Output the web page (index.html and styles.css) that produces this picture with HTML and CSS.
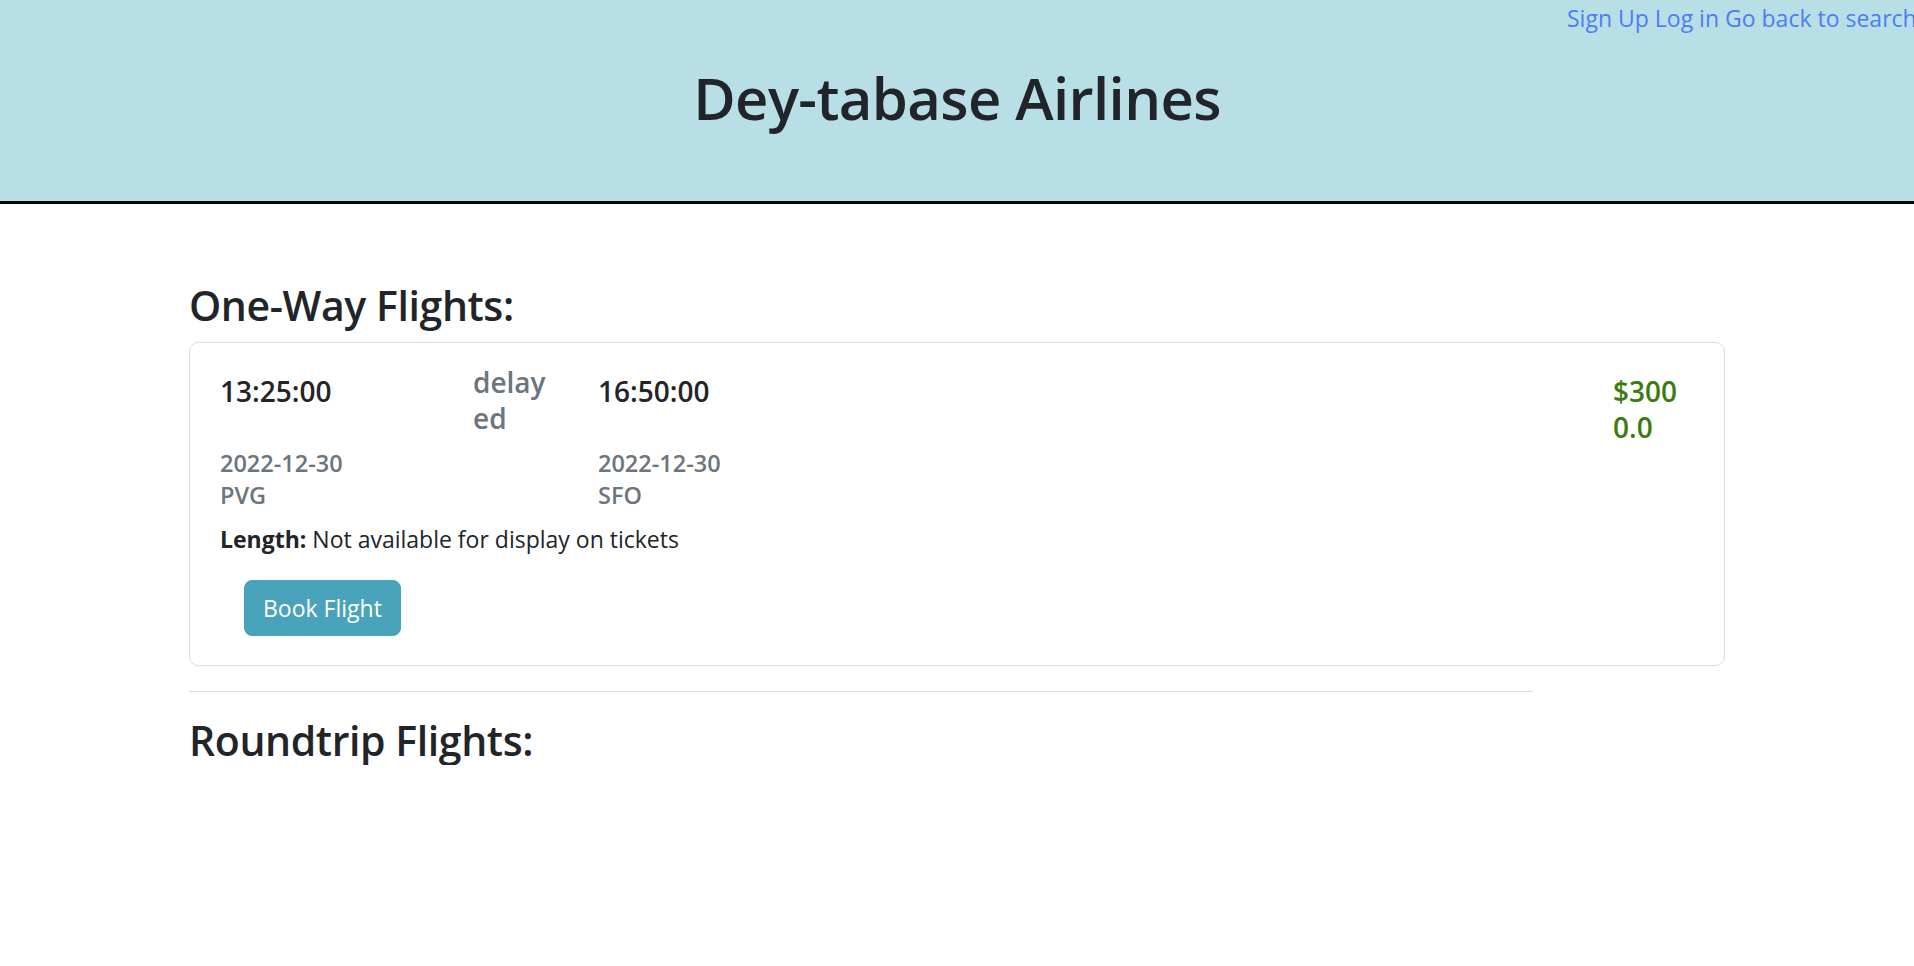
FILE: index.html
```html
<!DOCTYPE html>
<html lang="en">
<head>
<meta charset="utf-8">
<title>Dey-tabase Airlines</title>
<link rel="stylesheet" href="styles.css">
</head>
<body>
<header class="site-header">
  <nav class="top-links">
    <a href="#" class="top-link">Sign Up</a>
    <a href="#" class="top-link">Log in</a>
    <a href="#" class="top-link">Go back to search</a>
  </nav>
  <h1 class="site-title">Dey-tabase Airlines</h1>
</header>
<main class="container">
  <h3 class="section-title">One-Way Flights:</h3>
  <div class="card">
    <div class="card-body">
      <div class="flight-grid">
        <h5 class="time">13:25:00</h5>
        <h5 class="status">delayed</h5>
        <h5 class="time">16:50:00</h5>
        <h5 class="price">$3000.0</h5>
      </div>
      <div class="flight-grid detail-row">
        <div class="place">2022-12-30<br>PVG</div>
        <div></div>
        <div class="place">2022-12-30<br>SFO</div>
      </div>
      <p class="length"><strong>Length:</strong> Not available for display on tickets</p>
      <button class="btn-book" type="button">Book Flight</button>
    </div>
  </div>
  <hr class="divider">
  <h3 class="section-title roundtrip">Roundtrip Flights:</h3>
</main>
</body>
</html>
```
FILE: styles.css
```css
html, body {
  margin: 0;
  padding: 0;
  overflow-x: hidden;
}
body {
  font-family: "Open Sans", "Noto Sans", sans-serif;
  font-size: 24px;
  line-height: 1.5;
  color: #212529;
  background: #fff;
}
.site-header {
  background: #b9dfe6;
  height: 201px;
  border-bottom: 3px solid #000;
  overflow: hidden;
}
.top-links {
  margin-left: 1567px;
  white-space: nowrap;
  font-size: 23px;
  line-height: 36px;
}
.top-link {
  color: #4c7df4;
  text-decoration: none;
}
.site-title {
  margin: 27px 0 0;
  text-align: center;
  font-size: 58px;
  font-weight: 600;
  line-height: 1.2;
  letter-spacing: -0.6px;
}
.container {
  width: 1536px;
  margin: 0 auto;
  padding-top: 77px;
}
.section-title {
  margin: 0 0 12px;
  font-size: 41px;
  font-weight: 600;
  line-height: 1.2;
  letter-spacing: -0.4px;
}
.card {
  border: 1px solid #dedede;
  border-radius: 9px;
  overflow-wrap: anywhere;
}
.card-body {
  padding: 21px 24px 29px 30px;
}
.flight-grid {
  display: grid;
  grid-template-columns: 253px 125px 1fr 87px;
  align-items: start;
}
.time, .status, .price {
  margin: 0;
  font-size: 28px;
  line-height: 36px;
}
.time {
  margin-top: 9px;
  font-weight: 600;
}
.status {
  padding-right: 43px;
  color: #6c757d;
  font-weight: 600;
}
.price {
  margin-top: 9px;
  padding-right: 11px;
  color: #3b7c0e;
  font-weight: 600;
}
.detail-row {
  margin-top: 2px;
}
.place {
  font-size: 23.5px;
  line-height: 32px;
  font-weight: 600;
  color: #6c757d;
}
.length {
  margin: 10px 0 0;
  font-size: 23px;
  line-height: 36px;
}
.length strong {
  font-weight: 700;
}
.btn-book {
  display: block;
  margin: 23px 0 0 24px;
  padding: 9px 18px;
  height: 56px;
  border: 1px solid #49a3bb;
  border-radius: 8px;
  background: #49a3bb;
  color: #fff;
  font-family: inherit;
  font-size: 23px;
  line-height: 36px;
}
.divider {
  width: 1344px;
  margin: 25px 0 24px;
  border: 0;
  border-top: 1px solid #dadada;
}
.roundtrip {
  margin-bottom: 0;
}
```
